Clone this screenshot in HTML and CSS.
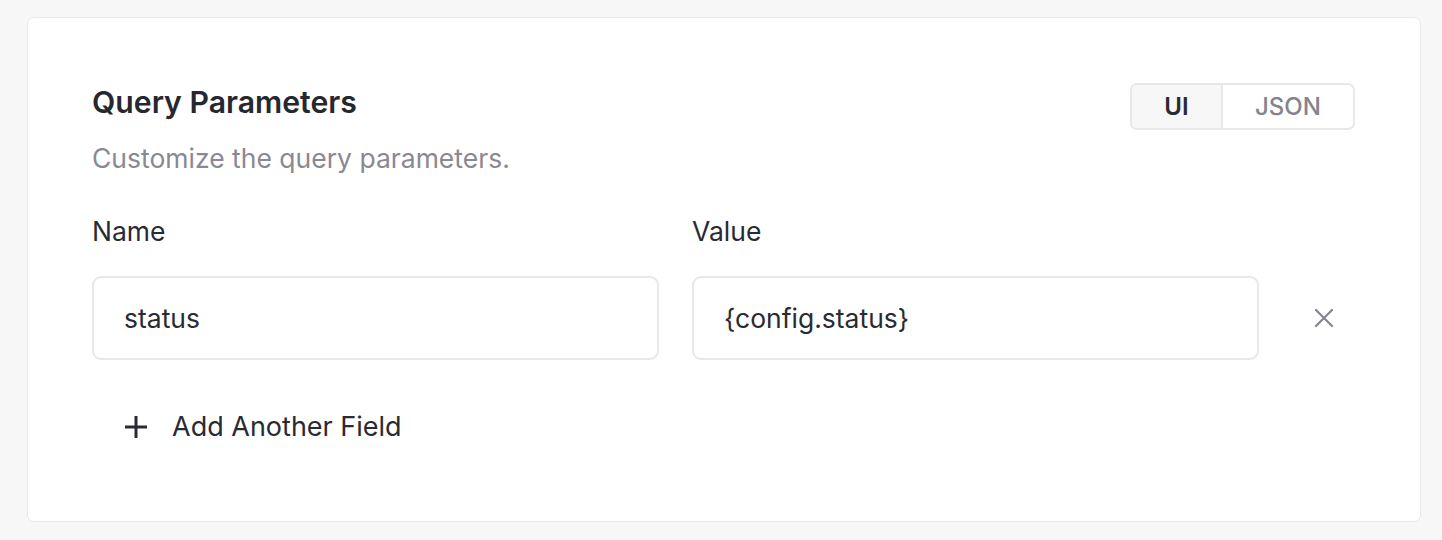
FILE: index.html
```html
<!DOCTYPE html>
<html>
<head>
<meta charset="utf-8">
<link rel="stylesheet" href="styles.css">
</head>
<body>
<div class="page">
  <section class="card">
    <div class="head">
      <div class="head-text">
        <h2 class="title">Query Parameters</h2>
        <p class="subtitle">Customize the query parameters.</p>
      </div>
      <div class="toggle">
        <span class="toggle-item active">UI</span>
        <span class="toggle-item">JSON</span>
      </div>
    </div>
    <div class="labels">
      <span class="label">Name</span>
      <span class="label">Value</span>
      <span></span>
    </div>
    <div class="row">
      <div class="field">status</div>
      <div class="field">{config.status}</div>
      <div class="remove">
        <svg width="20" height="20" viewBox="0 0 20 20"><path d="M2 2 L18 18 M18 2 L2 18" stroke="#85838e" stroke-width="2.2" stroke-linecap="round"/></svg>
      </div>
    </div>
    <div class="add">
      <svg width="24" height="24" viewBox="0 0 24 24"><path d="M12 1 V23 M1 12 H23" stroke="#2a2a32" stroke-width="3"/></svg>
      <span>Add Another Field</span>
    </div>
  </section>
</div>
</body>
</html>
```
FILE: styles.css
```css
html, body { margin: 0; padding: 0; }
body {
  background: #f7f7f7;
  font-family: Inter, "Noto Sans", sans-serif;
  color: #2a2a32;
}
.page {
  padding: 17px 21px 18px 27px;
}
.card {
  background: #fff;
  border: 1px solid #e9e9ea;
  border-radius: 7px;
  height: 505px;
  box-sizing: border-box;
  padding: 64px 65px 0 64px;
}
.head {
  display: flex;
  justify-content: space-between;
  align-items: flex-start;
}
.title {
  margin: 0;
  font-size: 30.2px;
  font-weight: 600;
  line-height: 40px;
  color: #27272f;
}
.subtitle {
  margin: 21px 0 0;
  font-size: 26.5px;
  line-height: 30px;
  color: #8a8893;
}
.toggle {
  display: flex;
  margin-top: 1px;
  border: 2px solid #e8e8ea;
  border-radius: 7px;
  overflow: hidden;
  height: 47px;
  box-sizing: border-box;
}
.toggle-item {
  display: flex;
  align-items: center;
  justify-content: center;
  font-size: 24px;
  font-weight: 500;
  color: #85838e;
  width: 130px;
}
.toggle-item.active {
  width: 89px;
  background: #f7f7f8;
  color: #2a2a32;
  font-weight: 600;
  border-right: 2px solid #e8e8ea;
}
.labels, .row {
  display: grid;
  grid-template-columns: 567px 567px 63px;
  column-gap: 33px;
}
.labels {
  margin-top: 41px;
}
.label {
  font-size: 26.5px;
  line-height: 34px;
}
.row {
  margin-top: 28px;
  align-items: center;
}
.field {
  height: 84px;
  box-sizing: border-box;
  border: 2px solid #e8e8ea;
  border-radius: 9px;
  padding: 0 30px;
  display: flex;
  align-items: center;
  font-size: 26.5px;
}
.remove {
  display: flex;
  justify-content: center;
  align-items: center;
}
.add {
  display: flex;
  align-items: center;
  gap: 24px;
  margin: 50px 0 0 32px;
  font-size: 27px;
}
```
